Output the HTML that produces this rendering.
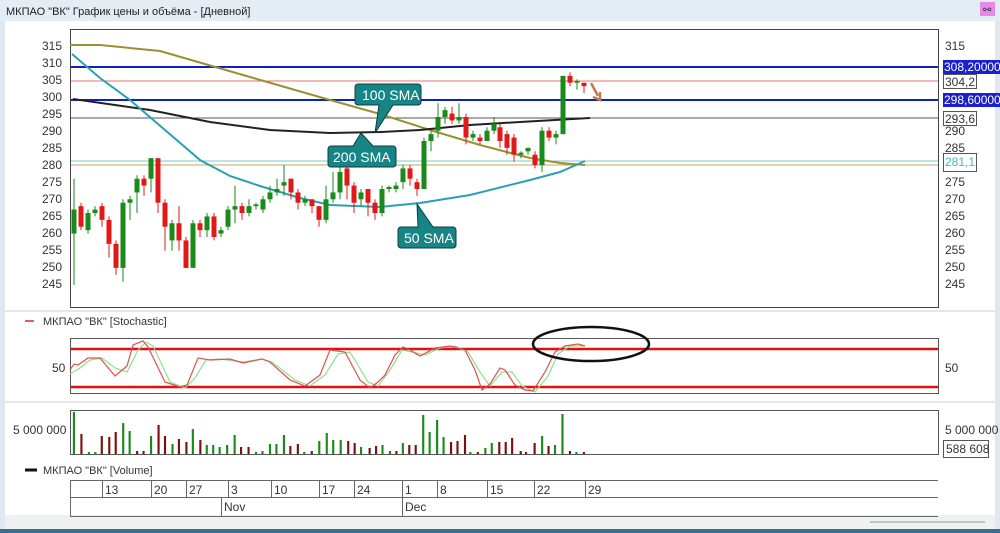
<!DOCTYPE html>
<html><head><meta charset="utf-8"><style>
body{margin:0;width:1000px;height:533px;overflow:hidden;background:#dfe8f1;font-family:"Liberation Sans",sans-serif}
svg{position:absolute;left:0;top:0}
</style></head><body>
<svg width="1000" height="533" xmlns="http://www.w3.org/2000/svg" font-family="Liberation Sans, sans-serif">
<rect x="0" y="0" width="1000" height="21" fill="#e4ecf4"/>
<text x="6" y="15" font-size="11" fill="#222">МКПАО "ВК" График цены и объёма - [Дневной]</text>
<rect x="980" y="2" width="15" height="14" fill="#e58ae8"/>
<text x="983" y="13" font-size="10" fill="#333">⚯</text>
<rect x="5" y="21" width="990" height="495" fill="#fff"/>
<rect x="5" y="515" width="990" height="14" fill="#eef0f2"/>
<line x1="870" y1="522" x2="985" y2="522" stroke="#999"/>
<rect x="0" y="529" width="1000" height="4" fill="#3a6e8e"/>
<line x1="5" y1="311" x2="995" y2="311" stroke="#ccc"/>
<line x1="5" y1="402" x2="995" y2="402" stroke="#ccc"/>
<rect x="70.5" y="29.5" width="868" height="278" fill="none" stroke="#444"/>
<g font-size="12" fill="#333">
<text x="42" y="50">315</text><text x="42" y="67">310</text><text x="42" y="84">305</text><text x="42" y="101">300</text><text x="42" y="118">295</text><text x="42" y="135">290</text><text x="42" y="152">285</text><text x="42" y="169">280</text><text x="42" y="186">275</text><text x="42" y="203">270</text><text x="42" y="220">265</text><text x="42" y="237">260</text><text x="42" y="254">255</text><text x="42" y="271">250</text><text x="42" y="288">245</text>
<text x="945" y="50">315</text><text x="945" y="135">290</text><text x="945" y="152">285</text><text x="945" y="186">275</text><text x="945" y="203">270</text><text x="945" y="220">265</text><text x="945" y="237">260</text><text x="945" y="254">255</text><text x="945" y="271">250</text><text x="945" y="288">245</text>
</g>
<line x1="71" y1="67" x2="938" y2="67" stroke="#1020c0" stroke-width="2"/>
<line x1="71" y1="81" x2="938" y2="81" stroke="#e87070"/>
<line x1="71" y1="100" x2="938" y2="100" stroke="#1020c0" stroke-width="2"/>
<line x1="71" y1="118" x2="938" y2="118" stroke="#555"/>
<line x1="71" y1="161" x2="938" y2="161" stroke="#7cc"/>
<line x1="71" y1="165" x2="938" y2="165" stroke="#bba860"/>
<polyline fill="none" stroke="#9a9030" stroke-width="2" points="70,45 100,45 160,51 250,77 330,100 380,114 430,130 480,145 530,158 560,163 585,165"/>
<polyline fill="none" stroke="#222" stroke-width="2" points="73,99 150,110 210,122 270,130 330,133 380,132 420,130 470,125 520,122 590,118"/>
<polyline fill="none" stroke="#2aa0b0" stroke-width="2" points="72,54 100,78 130,100 165,130 200,160 230,176 260,186 300,198 330,205 380,207 420,203 470,195 530,180 560,172 585,161"/>
<g id="candles"></g>
<path d="M591,83 L598,96" stroke="#c07a50" stroke-width="2.5"/><path d="M593,97 L600,100 L600,92" fill="none" stroke="#c07a50" stroke-width="2.5"/>
<g font-size="14" fill="#fff">
<path d="M358,84 h60 a3,3 0 0 1 3,3 v15 a3,3 0 0 1 -3,3 h-25 l-18,28 l4,-28 h-21 a3,3 0 0 1 -3,-3 v-15 a3,3 0 0 1 3,-3z" fill="#178585" stroke="#0b3d3d"/>
<text x="362" y="100">100 SMA</text>
<path d="M331,146 h22 l8,-13 l12,13 h20 a3,3 0 0 1 3,3 v15 a3,3 0 0 1 -3,3 h-62 a3,3 0 0 1 -3,-3 v-15 a3,3 0 0 1 3,-3z" fill="#178585" stroke="#0b3d3d"/>
<text x="333" y="162">200 SMA</text>
<path d="M401,227 h17 l-1,-23 l16,23 h20 a3,3 0 0 1 3,3 v15 a3,3 0 0 1 -3,3 h-52 a3,3 0 0 1 -3,-3 v-15 a3,3 0 0 1 3,-3z" fill="#178585" stroke="#0b3d3d"/>
<text x="404" y="243">50 SMA</text>
</g>
<g font-size="12">
<rect x="943" y="60" width="57" height="14" fill="#1a20d0"/><text x="944" y="71" fill="#fff">308,20000</text>
<rect x="943.5" y="74.5" width="33" height="14" fill="#fff" stroke="#555"/><text x="945" y="86" fill="#333">304,2</text>
<rect x="943" y="93" width="57" height="14" fill="#1a20d0"/><text x="944" y="104" fill="#fff">298,60000</text>
<rect x="943.5" y="111.5" width="33" height="14" fill="#fff" stroke="#555"/><text x="945" y="123" fill="#333">293,6</text>
<rect x="943.5" y="153.5" width="33" height="18" fill="#fff" stroke="#555"/><text x="945" y="166" fill="#4bb">281,1</text>
</g>
<line x1="25" y1="321" x2="34" y2="321" stroke="#e06060" stroke-width="2"/>
<text x="43" y="325" font-size="11" fill="#333">МКПАО "ВК" [Stochastic]</text>
<rect x="70.5" y="338.5" width="868" height="55" fill="none" stroke="#555"/>
<text x="52" y="372" font-size="12" fill="#333">50</text><text x="945" y="372" font-size="12" fill="#333">50</text>
<line x1="71" y1="349" x2="938" y2="349" stroke="#e01010" stroke-width="2.5"/>
<line x1="71" y1="387" x2="938" y2="387" stroke="#e01010" stroke-width="2.5"/>
<g>
<polyline fill="none" stroke="#8de08d" stroke-width="1.2" points="70,374 80,368 90,360 102,358 115,368 127,372 138,350 146,342 153,346 170,382 185,388 195,378 206,360 220,359 243,362 262,359 272,362 295,380 310,386 325,375 338,354 350,352 368,382 378,386 390,370 402,350 412,352 425,355 440,348 455,346 468,352 480,372 490,386 502,372 512,372 522,386 535,392 548,376 558,354 570,346 585,346"/>
<polyline fill="none" stroke="#e05050" stroke-width="1.2" points="70,370 74,364 78,365 88,358 100,358 115,376 127,366 133,345 143,341 148,347 165,382 180,387 187,385 198,358 210,360 230,359 243,363 262,359 270,362 290,380 305,386 320,375 330,350 345,352 360,380 370,388 378,382 385,375 395,355 403,347 410,350 420,356 435,348 450,346 465,350 475,370 482,390 490,384 500,368 505,370 515,385 525,390 533,391 545,372 555,352 565,346 578,344 585,346"/>
</g>
<ellipse cx="591" cy="344" rx="58" ry="17" fill="none" stroke="#111" stroke-width="2.5"/>
<rect x="70.5" y="410.5" width="868" height="44" fill="none" stroke="#555"/>
<text x="13" y="434" font-size="12" fill="#333">5 000 000</text><text x="945" y="434" font-size="12" fill="#333">5 000 000</text>
<rect x="943.5" y="440.5" width="45" height="17" fill="#fff" stroke="#555"/><text x="946" y="453" font-size="12" fill="#333">588 608</text>
<g id="vol" transform="translate(60,0) scale(1.0714,1) translate(-60,0)"></g>
<line x1="25" y1="470" x2="37" y2="470" stroke="#111" stroke-width="3"/>
<text x="43" y="474" font-size="11" fill="#333">МКПАО "ВК" [Volume]</text>
<g stroke="#666"><line x1="70" y1="480.5" x2="938" y2="480.5"/><line x1="70" y1="497.5" x2="938" y2="497.5"/><line x1="70" y1="516.5" x2="938" y2="516.5"/><line x1="70.5" y1="480" x2="70.5" y2="517"/>
<line x1="102.5" y1="480" x2="102.5" y2="497"/><line x1="151.5" y1="480" x2="151.5" y2="497"/><line x1="186.5" y1="480" x2="186.5" y2="497"/><line x1="228.5" y1="480" x2="228.5" y2="497"/><line x1="271.5" y1="480" x2="271.5" y2="497"/><line x1="319.5" y1="480" x2="319.5" y2="497"/><line x1="354.5" y1="480" x2="354.5" y2="497"/><line x1="402.5" y1="480" x2="402.5" y2="517"/><line x1="437.5" y1="480" x2="437.5" y2="497"/><line x1="487.5" y1="480" x2="487.5" y2="497"/><line x1="534.5" y1="480" x2="534.5" y2="497"/><line x1="585.5" y1="480" x2="585.5" y2="497"/><line x1="221.5" y1="497" x2="221.5" y2="517"/></g>
<g font-size="12" fill="#333"><text x="105" y="494">13</text><text x="154" y="494">20</text><text x="189" y="494">27</text><text x="231" y="494">3</text><text x="274" y="494">10</text><text x="322" y="494">17</text><text x="357" y="494">24</text><text x="405" y="494">1</text><text x="440" y="494">8</text><text x="490" y="494">15</text><text x="537" y="494">22</text><text x="588" y="494">29</text><text x="224" y="511">Nov</text><text x="405" y="511">Dec</text></g>
</svg>
<script>
var c=[[74,260,267,245,276],[81,268,262,261,269],[88,261,266,260,267],[95,266,267,265,268],[102,268,264,262,269],[109,264,257,253,265],[116,257,250,248,258],[123,250,269,246,270],[130,269,270,264,271],[137,272,276,266,277],[144,276,274,271,277],[151,276,282,272,282],[158,282,269,266,282],[165,269,262,255,270],[172,258,263,255,264],[179,263,258,255,268],[186,258,250,250,259],[193,250,263,250,264],[200,263,261,259,264],[207,261,265,259,266],[214,265,259,258,266],[221,260,261,259,262],[228,262,267,261,268],[235,267,268,263,274],[242,268,266,264,269],[249,266,268,265,270],[256,268,268.5,267,269],[263,267,270,266,271],[270,270,272,269,274],[277,272,273,271,276],[284,274,275,271,280],[291,276,272,270,276],[298,272,269,267,273],[305,269,270,268,271],[312,270,268,266,270],[319,268,264,262,268],[326,264,270,263,274],[333,270,272,269,278],[340,272,278,270,282],[347,279,274,270,283],[354,274,269,266,275],[361,270,272,268,273],[368,273,269,265,273],[375,269,266,264,270],[382,266,273,265,274],[389,273,273.6,272,274],[396,273,274,272,275],[403,275,279,273,280],[410,279,276,274,280],[417,275,273,271,276],[424,273,287,273,288],[431,287,289,284,290],[438,290,294,288,298],[445,294,296,292,297],[452,295,293,292,297],[459,293,294,292,298],[466,294,288,286,295],[473,288,289,287,290],[480,288,287,286,289],[487,287,290,287,291],[494,290,292,289,294],[500,291,287,285,292],[507,289,285,283,290],[514,288,283,281,289],[521,283,283.6,282,284],[528,284,285,283,285],[535,283,280,279,284],[542,280,290,278,291],[549,290,288,287,291],[556,288,289,286,290],[563,289,306,289,306],[570,306,304,303,307],[577,304,304.5,302,305],[584,304,303,301,304]];
function Y(p){return 45+(315-p)*3.4286}
var s='';c.forEach(function(d){var g=d[2]>=d[1],col=g?'#1a8a1a':'#e01818',t=Y(Math.max(d[1],d[2])),b=Y(Math.min(d[1],d[2]));
s+='<line x1="'+d[0]+'" x2="'+d[0]+'" y1="'+Y(d[4])+'" y2="'+Y(d[3])+'" stroke="'+col+'"/><rect x="'+(d[0]-2.5)+'" y="'+t+'" width="5" height="'+Math.max(1.5,b-t)+'" fill="'+col+'"/>';});
document.getElementById('candles').innerHTML=s;
var v=[[73,412,1],[80,434,0],[87,452,1],[93,452,1],[99,436,0],[106,437,0],[112,432,0],[119,423,1],[125,431,1],[132,451,0],[138,451,0],[145,436,1],[152,425,0],[158,436,0],[165,444,1],[171,439,0],[178,442,0],[184,429,1],[191,440,0],[197,445,1],[203,445,1],[209,447,1],[216,445,1],[223,435,1],[229,447,0],[236,447,0],[243,452,1],[249,451,1],[256,444,1],[262,444,1],[269,435,1],[275,446,0],[282,444,0],[288,452,1],[295,451,0],[302,441,1],[309,433,1],[315,440,1],[322,440,1],[329,441,0],[335,443,0],[341,447,1],[349,448,0],[355,446,0],[361,445,1],[368,451,1],[374,451,0],[380,443,1],[386,445,0],[392,445,0],[399,415,1],[405,432,1],[412,420,1],[418,437,1],[425,442,0],[431,441,0],[438,435,0],[443,452,1],[450,452,0],[457,448,1],[463,443,1],[470,442,0],[476,442,0],[482,438,0],[490,451,0],[495,452,0],[503,443,0],[510,436,1],[516,446,0],[522,445,1],[529,414,1],[536,451,0],[542,452,1],[549,452,0]];
var h='';v.forEach(function(d){h+='<rect x="'+(d[0]-1)+'" y="'+d[1]+'" width="2" height="'+(454-d[1])+'" fill="'+(d[2]?'#1a8a1a':'#7a1010')+'"/>';});
document.getElementById('vol').innerHTML=h;
</script>
</body></html>
